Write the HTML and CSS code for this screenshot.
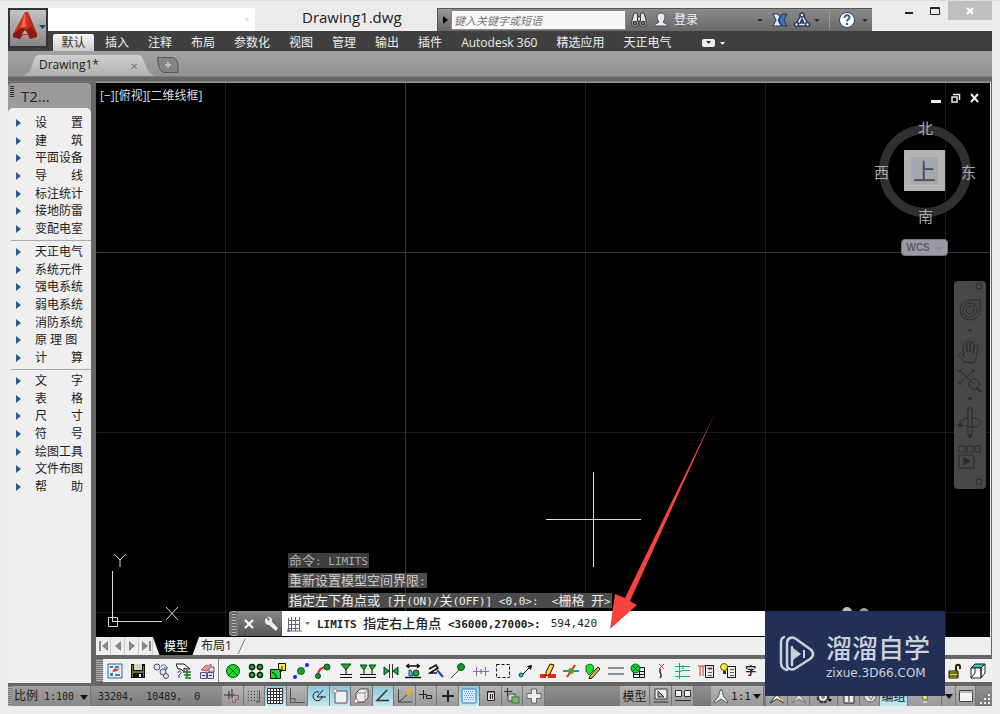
FILE: index.html
```html
<!DOCTYPE html>
<html lang="zh-CN">
<head>
<meta charset="utf-8">
<title>Drawing1.dwg</title>
<link rel="stylesheet" href="styles.css">
</head>
<body>
<div class="window">
  <header class="header">
    <div class="titlebar">
      <div class="quick"><span class="tiny-dot">▾</span></div>
      <h1 class="title">Drawing1.dwg</h1>
      <div class="info">
        <button class="info-toggle" aria-label="展开"></button>
        <input class="search" type="text" placeholder="键入关键字或短语" aria-label="搜索">
        <button class="flat" aria-label="查找"><svg width="18" height="18" viewBox="0 0 18 18"><g fill="#dfe2ea" stroke="#33363f"><path d="M4 2h3l1 5v8H2V9zM11 2h3l2 7v6h-6V7z"/><path d="M7.500 6h3v4h-3z"/><path d="M3.500 10.500h3v3h-3zM11.500 10.500h3v3h-3z" fill="#777"/></g></svg></button>
        <button class="flat login"><svg width="18" height="18" viewBox="0 0 18 18"><path d="M9 2c3 0 4 2 4 4s-1 4-2 5c0 1 4 1 5 4H2c1-3 5-3 5-4-1-1-2-3-2-5s1-4 4-4z" fill="#e9ecf3" stroke="#444b5c"/></svg><span>登录</span></button>
        <span class="caret login-caret"></span>
        <button class="flat" aria-label="Exchange"><svg width="18" height="18" viewBox="0 0 18 18"><path d="M2 3h5l2 3-2 3 3 6H2l3-6z" fill="#dfe8f5" stroke="#24365e"/><path d="M16 3h-5L8 9l3 6h5l-3-6z" fill="#3f70bd" stroke="#24365e"/></svg></button>
        <button class="flat" aria-label="Autodesk 360"><svg width="18" height="18" viewBox="0 0 18 18"><g fill="#e7ecf5" stroke="#283c69" stroke-width="1.500"><path d="M9 2 2 15h14z" stroke-linejoin="round"/><path d="M9 8 7 12h4z" fill="#6484b8"/><circle cx="9" cy="4" r="2"/><circle cx="3.500" cy="13.500" r="2"/><circle cx="14.500" cy="13.500" r="2"/></g></svg></button>
        <span class="caret"></span><span class="split"></span>
        <button class="flat help" aria-label="帮助"><svg width="20" height="20" viewBox="0 0 20 20"><circle cx="10" cy="10" r="7.500" fill="#fff" stroke="#24457f"/><path d="M7.500 8c0-4 5-3 5-.5 0 2-2.500 1.500-2.500 4M10 13v2" fill="none" stroke="#2b58a5" stroke-width="2"/></svg></button>
        <span class="caret"></span>
      </div>
      <div class="controls">
        <button aria-label="最小化"><svg width="12" height="12"><path d="M2 7h8v2H2z" fill="#222"/></svg></button>
        <button aria-label="最大化"><svg width="12" height="12"><path d="M1.500 2.500h9v7h-9zM1 3.500h10" fill="none" stroke="#222"/></svg></button>
        <button class="close" aria-label="关闭"><svg width="10" height="10"><path d="m2 2 6 6M8 2 2 8" stroke="#fff" stroke-width="2"/></svg></button>
      </div>
    </div>
    <nav class="menu">
      <button class="active">默认</button><button>插入</button><button>注释</button><button>布局</button><button>参数化</button><button>视图</button><button>管理</button><button>输出</button><button>插件</button><button>Autodesk 360</button><button>精选应用</button><button>天正电气</button>
      <button class="ribbon-toggle" aria-label="功能区"><svg width="26" height="10" viewBox="0 0 26 10"><rect x="1" y="1" width="13" height="8" rx="2" fill="#eee"/><path d="M5 3h5L7.500 6z" fill="#333"/><path d="M19 4h5l-2.500 3z" fill="#eee"/></svg></button>
    </nav>
    <button class="app" aria-label="应用程序菜单"><svg width="36" height="36" viewBox="0 0 36 36"><path d="M15 2 3 24v3l7 2 3-4h5l2 4 7-3v-2L18 2z" fill="#cf2f1b"/><path d="M15 2 10 20l6-4-1-14z" fill="#f0664a"/><path d="m3 24 9-7 4 3 5-4 6 8v3l-7 2-2-5-4-3-4 8-7-2z" fill="#8a1a10"/><path d="m18 2 9 22-7-8z" fill="#b92717"/><path d="m12 24 3-4 3 4z" fill="#aaa"/><path d="M29 15h7l-3.500 4z" fill="#2f4354"/></svg></button>
  </header>

  <div class="docs">
    <div class="doc-tab"><span>Drawing1*</span><button aria-label="关闭图形">✕</button></div>
    <button class="doc-new" aria-label="新图形"><svg width="24" height="18" viewBox="0 0 24 18"><path d="M1.500 1.500H15c5 0 7 4 7 8v7H9c-4 0-7-5-7.500-15z" fill="#858585" stroke="#555"/><path d="M12 6v6M9 9h6" stroke="#bbb" stroke-width="2"/></svg></button>
  </div>

  <div class="main">
    <aside class="palette">
      <div class="palette-head"><span class="grip"></span>T2...</div>
      <div class="palette-body">
        <ul><li><button>设　　置</button></li><li><button>建　　筑</button></li><li><button>平面设备</button></li><li><button>导　　线</button></li><li><button>标注统计</button></li><li><button>接地防雷</button></li><li><button>变配电室</button></li></ul>
        <hr>
        <ul><li><button>天正电气</button></li><li><button>系统元件</button></li><li><button>强电系统</button></li><li><button>弱电系统</button></li><li><button>消防系统</button></li><li><button>原 理 图</button></li><li><button>计　　算</button></li></ul>
        <hr>
        <ul><li><button>文　　字</button></li><li><button>表　　格</button></li><li><button>尺　　寸</button></li><li><button>符　　号</button></li><li><button>绘图工具</button></li><li><button>文件布图</button></li><li><button>帮　　助</button></li></ul>
      </div>
    </aside>

    <div class="work">
      <main class="canvas">
        <div class="view-label">[−][俯视][二维线框]</div>
        <svg class="cursor" width="96" height="96"><path d="M47.500 0v95M0 47.500h95" stroke="#ddd"/></svg>
        <svg class="ucs" width="74" height="76" viewBox="0 0 74 76"><path d="M5.500 19v51M6 69.500h49M1.500 65.500h9v9h-9zM7 2l6 6 6-6M13 8v7M59 55l12 13M71 55 59 68" fill="none" stroke="#ddd"/></svg>
        <svg class="pointer" width="110" height="220" viewBox="0 0 110 220"><path d="M105 0 15 185 5 181 0 216l27-24-7-4z" fill="#f8423c"/></svg>
        <div class="view-controls"><svg width="52" height="14" viewBox="0 0 52 14"><path d="M1 9h10v3H1z" fill="#eee"/><path d="M22 6h5v5h-5zM23 3.500h6.500V9" fill="none" stroke="#eee" stroke-width="1.500"/><path d="m41 3 7 8M48 3l-7 8" stroke="#eee" stroke-width="2"/></svg></div>
        <div class="cube">
          <span class="n">北</span><span class="w">西</span><button class="top">上</button><span class="e">东</span><span class="s">南</span>
        </div>
        <button class="wcs">WCS <i></i></button>
        <div class="navbar"><svg width="32" height="208" viewBox="0 0 32 208" fill="none" stroke="#2b2b2b"><circle cx="25" cy="5" r="3"/><path d="M16 19h10v10a10 10 0 1 1-10-10z"/><circle cx="16" cy="29" r="7"/><circle cx="16" cy="29" r="4"/><path d="M0 55h32" stroke="#505050"/><path d="M10 81c-2-4-6-6-5-8 2-2 4 1 5 3l-1-12c1-2 3-1 3 1l1 6V61c1-2 3-1 3 0v10l1-9c1-2 3-1 3 0l-1 10 2-7c2-2 3 0 3 1l-2 12-3 4zM5 89l15 14M20 89 5 103M5 92v-3h3M17 89h3v3M5 100v3h3"/><circle cx="20" cy="103" r="5"/><path d="m23 107 4 4" stroke-width="2"/><path d="M14 127h4v27h-4zM14 137c-12 2-10 8 0 8M18 137c13 1 10 8 2 9h-5"/><path d="m6 142 2 4-4-1zM14 49h4l-2 2zM14 117h4l-2 2zM14 155h4l-2 2z" fill="#2b2b2b"/><path d="M5 165h6v6H5zM13 165h6v6h-6zM21 165h5v6h-5zM5 174h15v13H5z"/><path d="m10 177 6 3-6 4z" fill="#2b2b2b"/><circle cx="25" cy="201" r="3"/></svg></div>
        <section class="command">
          <p class="dim"><b>命令</b>: LIMITS</p>
          <p class="mid"><b>重新设置模型空间界限</b>:</p>
          <p><b>指定左下角点或</b> [<b>开</b>(ON)/<b>关</b>(OFF)] &lt;0,0&gt;:&nbsp; &lt;<b>栅格</b> <b>开</b>&gt;</p>
          <div class="cmd-bar">
            <span class="cmd-grip"></span>
            <button aria-label="关闭命令行"><svg width="12" height="12"><path d="m2 2 8 8M10 2l-8 8" stroke="#fff" stroke-width="2"/></svg></button>
            <button aria-label="自定义"><svg width="16" height="16" viewBox="0 0 16 16"><path d="M2 5a4 4 0 0 1 1-3l3 3 1-2-3-2a4 4 0 0 1 5 5l6 6-2 3-7-6A4 4 0 0 1 2 5z" fill="#eee"/></svg></button>
            <label class="cmd-line" for="cmd"><svg width="24" height="18" viewBox="0 0 24 18"><path d="M2.500 3v13H16M5.500 2v14M9.500 2v14M13.500 2v14M2 5.500h12M2 9.500h12M2 13.500h12" fill="none" stroke="#667"/><path d="M19 7h5l-2.500 3z" fill="#777"/><circle cx="2.500" cy="15.500" r="1.500" fill="#3b7dc0"/></svg><span class="prompt">LIMITS <b>指定右上角点</b> &lt;36000,27000&gt;:</span></label>
            <input id="cmd" type="text" value="594,420">
          </div>
        </section>
      </main>

      <div class="layouts">
        <button aria-label="首个"><svg width="12" height="12"><path d="M1 1h2v10H1zM10 1v10L4 6z" fill="#888"/></svg></button><button aria-label="上一个"><svg width="12" height="12"><path d="M9 1v10L3 6z" fill="#888"/></svg></button><button aria-label="下一个"><svg width="12" height="12"><path d="M3 1v10l6-5z" fill="#888"/></svg></button><button aria-label="最后"><svg width="12" height="12"><path d="M9 1h2v10H9zM2 1v10l6-5z" fill="#888"/></svg></button>
        <button class="model">模型</button><button class="layout1">布局1<svg width="9" height="17"><path d="M1 16 8 1" stroke="#777" fill="none"/></svg></button>
      </div>

      <div class="toolbar">
        <span class="tool-grip"></span>
        <div class="files">
          <button aria-label="图纸"><svg viewBox="0 0 16 16"><path d="M1 1h14v14H1z" fill="#e5f3f8" stroke="#266b8a"/><path d="M3 3h3v2H3zM8 3h4v2H8zM3 10h3v3H3zM8 11h5v2H8z" fill="#4180ac"/><path d="m5 8 3-3 2 1 3-1-3 3-3 1z" fill="#d8463b"/></svg></button>
          <button aria-label="保存"><svg viewBox="0 0 16 16"><path d="M1 1h14v14H1z" fill="#111"/><path d="M4 1h8v6H4z" fill="#d5d5c6"/><path d="M2 2h1v12H2zM13 3h1v11h-1zM3 8h10v2H3z" fill="#77752b"/><path d="M9 11h2v3H9z" fill="#eee"/></svg></button>
          <button aria-label="替换"><svg viewBox="0 0 16 16"><g fill="#dbe6f3" stroke="#3f5271"><circle cx="4" cy="4" r="3"/><circle cx="10" cy="9" r="3"/><circle cx="13" cy="13" r="2.500"/></g><path d="M8 3c4-3 6 0 5 3m-2-2 2 3 2-3" fill="none" stroke="#356a9c"/></svg></button>
          <button aria-label="查询"><svg viewBox="0 0 16 16"><path d="M0 1h8l6 5h-4L8 5v4l-3-3H2z" fill="#fff" stroke="#111"/><path d="M7 9h8M8 12h7M9 15h6M11 7v7" stroke="#117a1b" stroke-width="1.500"/><path d="M2 10c0-3 4-2 3 0l-2 2v3" fill="none" stroke="#2230dd"/></svg></button>
          <button aria-label="图块"><svg viewBox="0 0 16 16"><path d="M1.500 9.500h6v6h-6zM8.500 9.500h6v6h-6zM10 4h5v5h-5z" fill="#dde" stroke="#557"/><path d="m2 7 5-5 2 1 3-2v3L8 8z" fill="#d99" stroke="#a65"/><path d="M3 12.500h3M10 12.500h3" stroke="#338"/></svg></button>
        </div>
        <div class="tools">
          <button aria-label="灯具"><svg viewBox="0 0 16 16"><circle cx="8" cy="8" r="6.500" fill="#10dd23" stroke="#064b0b"/><path d="m3 3 10 10M13 3 3 13" stroke="#064b0b"/></svg></button>
          <button aria-label="矩形布置"><svg viewBox="0 0 16 16"><path d="M4 4h8v8H4z" fill="none" stroke="#d22"/><g fill="#2fb53f" stroke="#062c0a" stroke-width="1.500"><circle cx="4" cy="4" r="2.500"/><circle cx="12" cy="4" r="2.500"/><circle cx="4" cy="12" r="2.500"/><circle cx="12" cy="12" r="2.500"/></g></svg></button>
          <button aria-label="复制"><svg viewBox="0 0 16 16"><path d="M8.500.5h7v7h-7z" fill="#fbec38" stroke="#111"/><path d="M.5 6.500h10v9H.5z" fill="#17df29" stroke="#111"/><path d="m2 9 4 3v3M12 3v5H9" fill="none" stroke="#111"/></svg></button>
          <button aria-label="移动"><svg viewBox="0 0 16 16"><path d="M2 14 14 2" stroke="#bbb"/><circle cx="8" cy="8" r="3.500" fill="#16a128" stroke="#063"/><circle cx="2" cy="14" r="2" fill="#22f"/><circle cx="14" cy="2" r="2" fill="#22f"/></svg></button>
          <button aria-label="弧线布置"><svg viewBox="0 0 16 16"><path d="M3 13C3 7 6 4 12 4" fill="none" stroke="#e22" stroke-width="2"/><g fill="#169829" stroke="#041"><circle cx="3" cy="13" r="2.500"/><circle cx="12" cy="4" r="3"/></g></svg></button>
          <button aria-label="开关"><svg viewBox="0 0 16 16"><path d="M3 1h10L8 7z" fill="#1bab2b" stroke="#041"/><path d="M8 7v5M2 11.500h12M2 14.500h12" stroke="#111"/></svg></button>
          <button aria-label="双开关"><svg viewBox="0 0 16 16"><path d="M0 2h7L4 7zM9 2h7l-4 5z" fill="#1bab2b" stroke="#041"/><path d="M4 7v5M12 7v5M0 11.500h16M0 14.500h16" stroke="#111"/></svg></button>
          <button aria-label="镜像"><svg viewBox="0 0 16 16"><path d="M1 4v8l5-4zM15 4v8l-5-4z" fill="#1bab2b" stroke="#041"/><path d="M6.500 1v14M9.500 1v14" stroke="#333"/></svg></button>
          <button aria-label="间距"><svg viewBox="0 0 16 16"><path d="M1 3h14M4 1 2 3l2 2M12 1l2 2-2 2M0 14.500h16" fill="none" stroke="#111" stroke-width="1.500"/><path d="M4 13V7h2l2 6z" fill="#59aef2" stroke="#249"/><circle cx="11" cy="10" r="3" fill="#1bab2b" stroke="#041"/></svg></button>
          <button aria-label="导线"><svg viewBox="0 0 16 16"><path d="m1 6 7-4 2 3-8 5h7" fill="none" stroke="#111" stroke-width="1.500"/><path d="m9 7 6 7" stroke="#23d" stroke-width="2"/></svg></button>
          <button aria-label="引线"><svg viewBox="0 0 16 16"><path d="m1 15 8-8" stroke="#444"/><circle cx="11" cy="4" r="3.500" fill="#169b25" stroke="#052"/></svg></button>
          <button aria-label="断开"><svg viewBox="0 0 16 16"><path d="M0 8.500h16M3.500 4v9M12.500 4v9" stroke="#8664c6"/><path d="M8 6v5" stroke="#47a"/></svg></button>
          <button aria-label="选择"><svg viewBox="0 0 16 16"><path d="M1.500 1.500h13v13h-13z" fill="none" stroke="#111" stroke-dasharray="3 2"/></svg></button>
          <button aria-label="箭头"><svg viewBox="0 0 16 16"><path d="m4 12 9-9" stroke="#111"/><path d="m9 3 5-1-1 5z"/><circle cx="3" cy="12" r="2" fill="#3bb6bd" stroke="#056"/></svg></button>
          <button aria-label="画笔"><svg viewBox="0 0 16 16"><path d="M0 11h6v4H0zM8 11h8v4H8z" fill="#ef2018"/><path d="m6 9 4-8 4 1-4 9-4 2z" fill="#ffd63b" stroke="#111"/></svg></button>
          <button aria-label="节点"><svg viewBox="0 0 16 16"><path d="M0 8h16" stroke="#1b9ba0" stroke-width="2"/><path d="m4 14 8-12" stroke="#ef2018" stroke-width="2"/><circle cx="8" cy="8" r="3" fill="#729420"/></svg></button>
          <button aria-label="编辑"><svg viewBox="0 0 16 16"><path d="M1 3c5-4 9-1 7 5l-4 4-3-4z" fill="#1be32a" stroke="#062"/><path d="m5 13 8-9 2 2-8 9-3 1z" fill="#dfc52e" stroke="#111"/></svg></button>
          <button aria-label="平行"><svg viewBox="0 0 16 16"><path d="M0 5h16M0 11h16" stroke="#7c94a6" stroke-width="2"/></svg></button>
          <button aria-label="统计"><svg viewBox="0 0 16 16"><path d="M3.500 4.500h11v10h-11zM3 8.500h12M3 11.500h12M9.500 4v11" fill="#eee" stroke="#111"/><circle cx="5.500" cy="5.500" r="4.500" fill="#18d827" stroke="#052"/><path d="m2 2 7 7M9 2 2 9" stroke="#052"/></svg></button>
          <button aria-label="剪断"><svg viewBox="0 0 16 16"><path d="M8 6c-4 3 3 5-1 9" fill="none" stroke="#333" stroke-width="1.500"/><path d="m6 1 5 5M11 1 6 6" stroke="#e33"/></svg></button>
          <button aria-label="系统图"><svg viewBox="0 0 16 16"><path d="M0 3.500h15M0 8.500h5l3-1h7M0 13.500h15M8 2v4" fill="none" stroke="#1da36b"/><path d="M4.500 0v16" stroke="#38c"/></svg></button>
          <button aria-label="计算"><svg viewBox="0 0 16 16"><path d="M0 3h8M2 3v10M5 3v10" stroke="#c33"/><path d="M7.500 2.500h8v12h-8z" fill="#eee" stroke="#111"/><path d="M10 5h4v1h-4zM10 9.500h4M10 12.500h4" stroke="#555" fill="#333"/></svg></button>
          <button aria-label="照度"><svg viewBox="0 0 16 16"><path d="M7.500 3.500h8v11h-8z" fill="#eee" stroke="#111"/><path d="M10 6.500h4M10 9.500h4M10 12.500h4" stroke="#555"/><circle cx="4" cy="4" r="3.500" fill="#fbee35" stroke="#651"/><path d="M3 8h3v3H3z" fill="#333"/></svg></button>
          <button class="zi">字</button>
        </div>
        <div class="files right">
          <button aria-label="解锁"><svg viewBox="0 0 16 16"><path d="M2 8h9v7H2zM2 10h9M2 13h9" fill="#e1d126" stroke="#111"/><path d="M9 8V4c0-3 4-3 4 0v2" fill="none" stroke="#221" stroke-width="2"/></svg></button>
          <button aria-label="三维"><svg viewBox="0 0 16 16"><path d="m1 5 4-4h10l-4 4z" fill="#38c6c5" stroke="#111"/><path d="M1 5h10v10H1zM11 5l4-4v9l-4 5zM1 15l4-5V5" fill="#fff" stroke="#222"/></svg></button>
        </div>
      </div>
    </div>
  </div>

  <footer class="status">
    <span class="tool-grip"></span>
    <button class="scale"><b>比例</b> 1:100 <i></i></button>
    <output class="coords">33204,&nbsp; 10489,&nbsp; 0</output>
    <div class="toggles">
      <button aria-label="推断约束"><svg viewBox="0 0 16 16"><path d="M0 7h11M5 3v8M8 1v9" stroke="#333"/><path d="M10.500 7.500h4v4h-3v3h-3v-3" fill="none" stroke="#a55"/></svg></button>
      <button aria-label="捕捉"><svg viewBox="0 0 16 16"><path d="M2 3.500h10M2 6.500h10M2 9.500h10M2 12.500h10" stroke="#444" stroke-dasharray="1 2"/><path d="M13.500 2v12H10" fill="none" stroke="#555"/></svg></button>
      <button class="on" aria-label="栅格"><svg viewBox="0 0 16 16"><path d="M.5.500h15v15H.5z" fill="#fff"/><path d="M.5.500h15v15H.5zM3.500 0v16M6.500 0v16M9.500 0v16M12.500 0v16M0 3.500h16M0 6.500h16M0 9.500h16M0 12.500h16" fill="none" stroke="#333"/></svg></button>
      <button aria-label="正交"><svg viewBox="0 0 16 16"><path d="M1.500 0v14.500H16M2 10.500h4v4" fill="none" stroke="#555"/></svg></button>
      <button class="on" aria-label="极轴"><svg viewBox="0 0 16 16"><path d="M12 8a4.500 4.500 0 1 1-3-4M7 9l6-7M7 9h9" fill="none" stroke="#222"/></svg></button>
      <button class="on" aria-label="对象捕捉"><svg viewBox="0 0 16 16"><path d="M3 3h12v12H3z" fill="#eef" stroke="#555"/><circle cx="3" cy="3" r="2" fill="#fff" stroke="#c74"/></svg></button>
      <button aria-label="三维捕捉"><svg viewBox="0 0 16 16"><path d="m3 5 4-4h8v9l-4 4H3z" fill="#eee" stroke="#444"/><path d="M3 5h9v9M12 5l3-4" fill="none" stroke="#888"/><circle cx="3" cy="13" r="2" fill="#fff" stroke="#c74"/></svg></button>
      <button class="on" aria-label="对象追踪"><svg viewBox="0 0 16 16"><path d="M12 2 2 12.500h12" fill="none" stroke="#333" stroke-width="1.500"/></svg></button>
      <button aria-label="动态UCS"><svg viewBox="0 0 16 16"><path d="M1.500 1v13H15M2 14l9-8" fill="none" stroke="#444"/><path d="m9 5 4-5 3 3-5 5z" fill="#f0a83a"/></svg></button>
      <button aria-label="动态输入"><svg viewBox="0 0 16 16"><path d="M5.500 2v9M1 6.500h8M8.500 7.500h5v3h-5z" fill="none" stroke="#222"/></svg></button>
      <button aria-label="线宽"><svg viewBox="0 0 16 16"><path d="M2 8h12M8 2v12" stroke="#222" stroke-width="2"/></svg></button>
      <button class="on" aria-label="透明度"><svg viewBox="0 0 16 16"><rect x="1" y="1" width="14" height="14" rx="1" fill="#dceefd" stroke="#277ac6"/><path d="M3 3.500h10M4 5.500h10M3 7.500h10M4 9.500h10M3 11.500h10" stroke="#5298d5" stroke-dasharray="1 1"/></svg></button>
      <button aria-label="快捷特性"><svg viewBox="0 0 16 16"><path d="M4.500 3.500h7v9h-7z" fill="#ddd" stroke="#222"/><path d="M4 4h8M7.500 6v5M9.500 6v5" stroke="#222"/></svg></button>
      <button aria-label="选择循环"><svg viewBox="0 0 16 16"><path d="M3.500 0v8M0 3.500h8" stroke="#222"/><path d="M4 6h7v7H4z" fill="#ccc" stroke="#555"/><rect x="8" y="9" width="7" height="6" fill="#7eb866" stroke="#374"/></svg></button>
      <button aria-label="注释监视器"><svg viewBox="0 0 16 16"><path d="M5.500 1h5v4.500H15v5h-4.500V15h-5v-4.500H1v-5h4.500z" fill="#eee" stroke="#666"/></svg></button>
    </div>
    <div class="spacer"></div>
    <button class="cell space">模型</button>
    <button class="cell" aria-label="快速查看布局"><svg viewBox="0 0 16 16"><path d="M2 1h12v10H2zM1 14h14M5 3v6h6z" fill="#eee" stroke="#333"/></svg></button>
    <button class="cell" aria-label="快速查看图形"><svg viewBox="0 0 16 16"><path d="M.5 2.500h6v6h-6zM9.500 2.500h6v6h-6zM0 12.500h16" fill="#eee" stroke="#333"/></svg></button>
    <span class="gap"></span>
    <button class="cell anno"><svg viewBox="0 0 16 16"><path d="M8 1c1 0 2 7 3 8l4 5-1 1-6-4-6 4-1-1 4-5c1-1 2-8 3-8z" fill="#eee" stroke="#555"/></svg>1:1 <i></i></button>
    <div class="tray">
      <button class="cell" aria-label="注释可见性"><svg viewBox="0 0 16 16"><path d="m1 15 7-9 7 9-7-4z" fill="#eee" stroke="#333"/><path d="m10 10 4 1 1 4z" fill="#ffb02d"/></svg></button>
      <button class="cell" aria-label="自动比例"><svg viewBox="0 0 16 16"><path d="m1 15 7-9 7 9-7-4z" fill="#ddd" stroke="#777"/></svg></button>
      <button class="cell gear" aria-label="工作空间"><svg viewBox="0 0 16 16"><circle cx="7" cy="9" r="5" fill="none" stroke="#333" stroke-width="3" stroke-dasharray="3 1"/><circle cx="7" cy="9" r="4.500" fill="#eee" stroke="#333"/><circle cx="7" cy="9" r="2" fill="#888"/><path d="M12 11h4l-2 3z"/></svg></button>
      <button class="cell" aria-label="锁定"><svg viewBox="0 0 16 16"><path d="M3 6h10v9H3zM8 8v6" fill="#eee" stroke="#222"/></svg></button>
      <button class="cell accel" aria-label="硬件加速"><svg viewBox="0 0 16 16"><circle cx="8" cy="8" r="6" fill="#ddd" stroke="#666"/><path d="m6 7 3 5 4-7" stroke="#777" fill="none"/></svg></button>
      <button class="cell on group">编组</button>
      <button class="cell bulb" aria-label="隔离对象"><svg viewBox="0 0 16 16"><path d="M8 2c5 0 5 5 2 7v3H6V9C3 7 3 2 8 2z" fill="#ffe44c" stroke="#666"/><path d="M6 14h4" stroke="#fff"/></svg></button>
      <button class="cell more" aria-label="状态栏菜单"><i></i></button>
      <button class="cell full" aria-label="全屏显示"><svg viewBox="0 0 16 16"><path d="M1.500 2.500h13v11h-13z" fill="#f4f4f4" stroke="#444"/><path d="M1 4h14" stroke="#68a"/></svg></button>
    </div>
    <svg class="resize" width="14" height="16"><path d="M10 5h2v2h-2zM6 9h2v2H6zM10 9h2v2h-2zM2 13h2v2H2zM6 13h2v2H6zM10 13h2v2h-2z" fill="#eee"/></svg>
  </footer>

  <div class="brand">
    <svg class="knobs" width="30" height="4"><circle cx="7" cy="5" r="5" fill="#bbb"/><circle cx="24" cy="6" r="5" fill="#999"/></svg>
    <svg width="36" height="38" viewBox="0 0 36 38"><g fill="none" stroke="#ccd0db" stroke-width="2.500" stroke-linecap="round"><path d="M13 30V12M8 35c-4-1-6-3-6-7V7c0-2 1-4 3-5"/><path d="M8 25V8c0-5 5-7 9-4l14 10c4 3 4 7 0 10L17 33c-4 3-9 1-9-3z"/></g><path d="m14 13 8 6-8 6zM24 15h2v8h-2z" fill="#ccd0db"/></svg>
    <div><strong>溜溜自学</strong><span>zixue.3D66.COM</span></div>
  </div>
</div>
</body>
</html>
```
FILE: styles.css
```css
* { box-sizing: border-box; }
body { margin: 0; background: #ebebeb; font: 12px/16px "Open Sans", "Noto Sans CJK SC", sans-serif; color: #222; }
button, input { font: inherit; color: inherit; border: 0; padding: 0; background: none; border-radius: 0; }
svg { display: block; flex: none; }
ul, p, h1 { margin: 0; padding: 0; list-style: none; }
.window { position: relative; min-height: 100vh; padding: 0 8px 8px; display: flex; flex-direction: column; border-top: 1px solid #dcdcdc; }

.header { display: grid; grid-template-rows: 30px 20px; }
.titlebar { grid-area: 1 / 1; display: flex; align-items: flex-end; min-width: 0; }
.quick { width: 207px; height: 23px; margin-left: 40px; background: #fff; text-align: right; padding: 2px 6px; }
.tiny-dot { color: #ddd; font-size: 8px; }
.title { margin-left: 47px; width: 135px; font: 15px/28px "Open Sans", sans-serif; white-space: nowrap; }
.info { display: flex; align-items: center; width: 435px; height: 23px; border-top: 1px solid #555; background: linear-gradient(#8a8a8a, #686868); color: #eee; }
.info-toggle { width: 14px; height: 22px; background: linear-gradient(#999, #666); border-left: 1px solid #555; }
.info-toggle::before { content: ""; display: block; width: 0; margin-left: 5px; border: 4px solid transparent; border-left: 5px solid #000; border-right: 0; }
.search { width: 175px; height: 20px; padding: 0 2px; background: #f8f8f8; border: 1px solid #888; font-style: italic; font-size: 11px; }
.search::placeholder { color: #777; opacity: 1; }
.flat { display: flex; align-items: center; gap: 4px; margin-left: 4px; }
.caret { width: 0; border: 3px solid transparent; border-top: 3px solid #333; border-bottom: 0; margin-left: 3px; }
.login-caret { margin-left: auto; margin-right: 4px; }
.split { width: 1px; height: 18px; background: #999; margin-left: 9px; }
.help { margin-left: 7px; }
.info > .caret:last-child { margin: 0 4px 0 5px; }
.controls { display: flex; align-self: flex-start; margin-left: auto; height: 19px; }
.controls button { width: 26px; display: grid; place-items: center; }
.controls .close { width: 44px; background: #bfbfbf; }
.menu { grid-area: 2 / 1; display: flex; align-items: flex-end; padding-left: 45px; background: #404040; color: #eee; }
.menu button { height: 17px; line-height: 16px; margin-right: 19px; white-space: nowrap; }
.menu .active { width: 41px; margin-right: 11px; background: linear-gradient(#f8f8f8, #ccc); color: #333; border-radius: 2px 2px 0 0; }
.menu .ribbon-toggle { margin-left: 11px; display: flex; align-items: center; }
.app { grid-area: 1 / 1 / 3 / 2; align-self: start; width: 40px; height: 40px; margin-top: 7px; border: 2px solid #333; background: linear-gradient(#c4c4c4, #858585); }

.docs { display: flex; align-items: flex-end; height: 31px; background: linear-gradient(#a2a2a2, #929292 25px, #666 26px); border-bottom: 1px solid #777; padding: 0 0 5px 16px; }
.doc-tab { display: flex; justify-content: space-between; width: 130px; height: 21px; padding: 0 16px 0 15px; background: linear-gradient(#d0d0d0, #b0b0b0); clip-path: polygon(14px 0, 115px 0, 118px 2px, 124px 16px, 130px 100%, 0 100%, 6px 16px, 11px 2px); font-size: 12px; line-height: 20px; }
.doc-tab button { color: #777; font-size: 10px; }
.doc-new { margin: 0 0 2px 2px; }

.main { flex: 1; display: flex; min-height: 560px; background: #666; }
.palette { width: 83px; display: flex; flex-direction: column; margin: 1px 0 3px; background: #9b9b9b; border-radius: 4px 4px 0 0; }
.palette-head { display: flex; align-items: center; gap: 7px; height: 25px; font-size: 15px; padding-left: 2px; }
.grip { width: 4px; height: 12px; margin-bottom: 8px; background: repeating-linear-gradient(#333 0 1px, transparent 1px 2px); }
.palette-body { flex: 1; background: #efefef; border-radius: 5px 5px 0 0; padding-top: 6px; }
.palette-body ul { display: grid; grid-template-rows: repeat(7, 1fr); height: 124px; }
.palette-body li { display: flex; }
.palette-body button { display: flex; align-items: center; gap: 14px; padding-left: 8px; white-space: pre; line-height: 16px; }
.palette-body button::before { content: ""; border: 4px solid transparent; border-left: 5px solid #285c94; border-right: 0; }
.palette-body hr { margin: 2px 0 2px 3px; border: 0; height: 1px; background: #aaa; }

.work { flex: 1; min-width: 0; display: flex; flex-direction: column; margin-left: 5px; }
.canvas { flex: 1; position: relative; min-height: 500px; margin-right: 1px; border-right: 1px solid #eee; border-top: 1px solid #999; background:
  linear-gradient(#383838, #383838) 309px 0 / 1px 100% no-repeat,
  linear-gradient(#383838, #383838) 0 169px / 100% 1px no-repeat,
  linear-gradient(90deg, #1b1b1b 1px, transparent 1px) 129px 0 / 180px 100%,
  linear-gradient(#1b1b1b 1px, transparent 1px) 0 169px / 100% 180px, #000; }
.view-label { padding: 5px 4px; color: #ddd; }
.cursor { position: absolute; left: 450px; top: 389px; }
.ucs { position: absolute; left: 11px; bottom: 9px; }
.pointer { position: absolute; left: 514px; top: 330px; z-index: 2; }
.view-controls { position: absolute; right: 8px; top: 8px; }
.cube { position: absolute; right: 19px; top: 42px; width: 92px; height: 92px; border: 9px solid #303030; border-radius: 50%; color: #aaa; font: 15px/16px "Noto Sans CJK SC", sans-serif; }
.cube span { position: absolute; }
.cube .n { left: 30px; top: -14px; }
.cube .s { left: 30px; bottom: -16px; }
.cube .w { left: -14px; top: 30px; }
.cube .e { right: -14px; top: 30px; }
.cube .top { width: 41px; height: 41px; margin: 16px; background: #a4a8af; border: 7px solid #b4b4b4; font-size: 23px; line-height: 25px; color: #4a505b; }
.wcs { position: absolute; right: 42px; top: 156px; width: 47px; height: 17px; border: 1px solid #777; border-radius: 4px; background: #9b9aa4; color: #5d5d69; font: bold 10px/14px "Liberation Sans", sans-serif; }
.wcs i { display: inline-block; border: 4px solid transparent; border-top: 4px solid #8b8b96; border-bottom: 0; margin-left: 2px; }
.navbar { position: absolute; right: 4px; top: 198px; background: #484848; border-radius: 4px; }
.command { position: absolute; left: 133px; right: 145px; bottom: 1px; font: 11px/15px "DejaVu Sans Mono", "Noto Sans CJK SC", monospace; color: #eee; }
.command b { font: 13px/14px "Noto Sans CJK SC", sans-serif; }
.command p { width: max-content; height: 15px; margin: 0 0 5px 59px; padding: 0 1px; background: #4b4b4b; white-space: nowrap; }
.command .dim { color: #aaa; background: #3d3d3d; }
.command .mid { color: #ccc; }
.command p:nth-of-type(3) { margin-bottom: 3px; }
.cmd-bar { display: flex; align-items: center; height: 25px; background: #fff; color: #222; border-radius: 4px 0 0 4px; }
.cmd-bar > button { height: 25px; width: 22px; display: grid; place-items: center; background: linear-gradient(#888, #555); }
.cmd-grip { width: 9px; height: 25px; border-left: 3px solid #777; border-right: 2px solid #777; border-radius: 4px 0 0 4px; background: repeating-linear-gradient(#bbb 0 1px, #666 1px 3px); }
.cmd-line { display: flex; align-items: center; gap: 7px; padding-left: 4px; white-space: nowrap; }
.prompt { font-weight: bold; }
.command .prompt b { font-weight: 500; }
.cmd-bar input { flex: 1; min-width: 60px; margin-left: 10px; height: 20px; outline: 0; }

.layouts { display: flex; align-items: stretch; height: 18px; padding-left: 1px; background: #eee; margin-right: 1px; }
.layouts button { width: 14px; display: grid; place-items: center; border-right: 1px solid #ccc; }
.layouts .model { width: 46px; background: #000; color: #fff; clip-path: polygon(0 0, 100% 0, 86% 100%, 14% 100%); border: 0; line-height: 17px; }
.layouts .layout1 { display: flex; align-items: center; width: auto; gap: 5px; border: 0; margin-left: 2px; }
.toolbar { display: flex; align-items: stretch; height: 31px; border-top: 4px solid #666; border-bottom: 4px solid #666; background: #f1f1f1; }
.tool-grip { width: 7px; background: repeating-linear-gradient(#777 0 1px, #aaa 1px 2px); }
.files { display: grid; grid-template-columns: repeat(5, 23px); border-right: 1px solid #888; margin-right: 3px; }
.files button, .tools button { display: grid; place-items: center; }
.files svg, .tools svg, .status button svg { width: 16px; height: 16px; }
.tools { display: grid; grid-template-columns: repeat(24, 1fr); width: 540px; }
.files.right { margin-left: auto; grid-template-columns: repeat(2, 23px); border: 0; }
.zi { font-weight: bold; font-size: 11px; }

.status { display: flex; height: 20px; background: linear-gradient(#909090, #777); font: 10px/19px "DejaVu Sans Mono", "Noto Sans CJK SC", monospace; color: #222; overflow: hidden; }
.status .tool-grip { width: 4px; }
.status button { background: linear-gradient(#b5b5b5, #989898); border-right: 1px solid #777; }
.status .scale { width: 79px; white-space: nowrap; background: linear-gradient(#a0a0a0, #888); }
.scale b { font: 12px/16px "Noto Sans CJK SC", sans-serif; }
.status i { display: inline-block; border: 4px solid transparent; border-top: 5px solid #111; border-bottom: 0; }
.coords { width: 131px; padding: 1px 7px 0; background: linear-gradient(#949494, #7c7c7c); white-space: nowrap; }
.toggles { display: grid; grid-template-columns: repeat(15, 1fr); width: 323px; }
.toggles button, .cell { display: flex; align-items: center; justify-content: center; }
.status .on { background: linear-gradient(#8fc7d9, #c4e8f0); }
.spacer { flex: 1; min-width: 8px; }
.cell { width: 22px; flex: none; }
.status .space { width: 30px; font: 12px/16px "Noto Sans CJK SC", sans-serif; }
.gap { width: 17px; }
.status .anno { width: 53px; gap: 2px; font-size: 11px; }
.tray { display: flex; margin-left: 2px; }
.status .gear { width: 28px; }
.status .accel { width: 20px; }
.status .group { width: 28px; font: 12px/16px "Noto Sans CJK SC", sans-serif; }
.status .bulb { width: 34px; }
.status .more { width: 14px; }
.status .full { width: 20px; }
.resize { margin: 3px 0 0 2px; }

.brand { position: absolute; right: 55px; bottom: 18px; z-index: 3; display: flex; align-items: center; gap: 11px; width: 180px; height: 85px; padding-left: 14px; background: #223057; color: #ccd0db; }
.brand div { display: grid; white-space: nowrap; }
.brand strong { font: 500 26px/38px "Noto Sans CJK SC", sans-serif; }
.brand span { font: 12px/14px "DejaVu Sans", sans-serif; }
.knobs { position: absolute; left: 75px; top: -4px; }
```
